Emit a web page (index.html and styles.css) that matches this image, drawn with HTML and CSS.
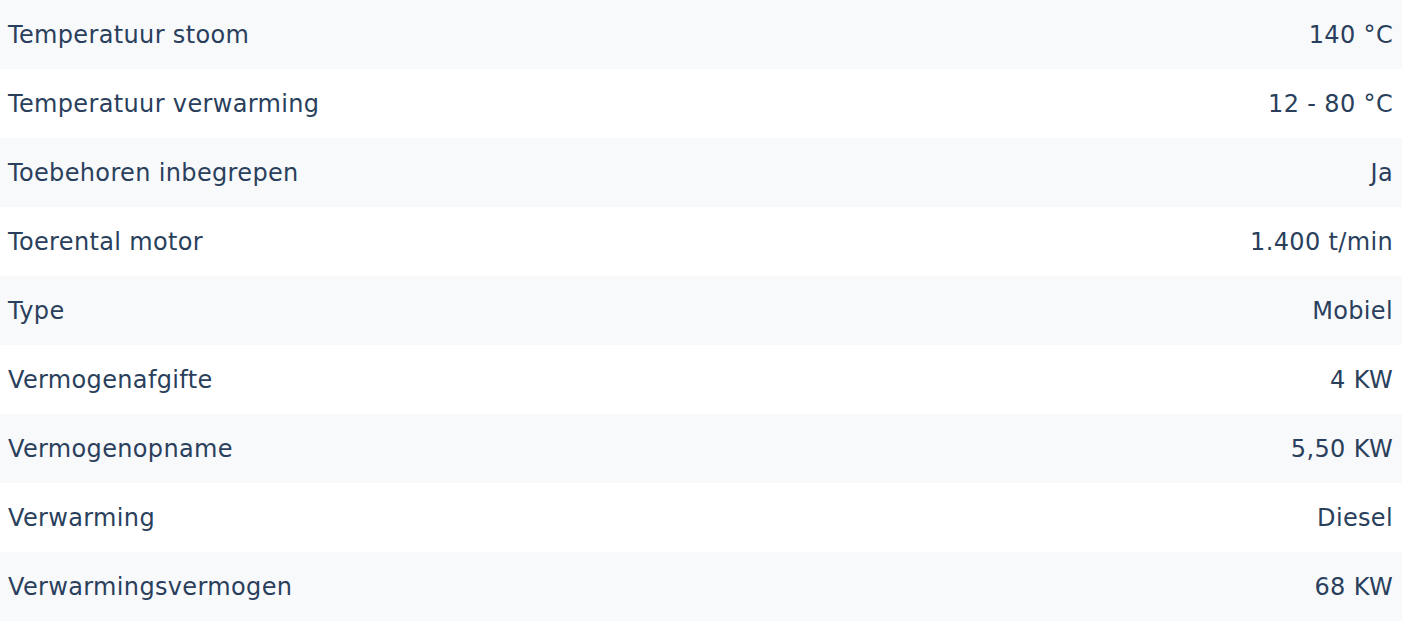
FILE: index.html
```html
<!DOCTYPE html>
<html lang="nl">
<head>
    <meta charset="UTF-8">
    <meta name="viewport" content="width=device-width, initial-scale=1.0">
    <title>Specificaties</title>
<link rel="stylesheet" href="styles.css">
</head>
<body>
    <div class="specs">
        <div class="spec-row"><span class="spec-label">Temperatuur stoom</span><span class="spec-value">140 °C</span></div>
        <div class="spec-row"><span class="spec-label">Temperatuur verwarming</span><span class="spec-value">12 - 80 °C</span></div>
        <div class="spec-row"><span class="spec-label">Toebehoren inbegrepen</span><span class="spec-value">Ja</span></div>
        <div class="spec-row"><span class="spec-label">Toerental motor</span><span class="spec-value">1.400 t/min</span></div>
        <div class="spec-row"><span class="spec-label">Type</span><span class="spec-value">Mobiel</span></div>
        <div class="spec-row"><span class="spec-label">Vermogenafgifte</span><span class="spec-value">4 KW</span></div>
        <div class="spec-row"><span class="spec-label">Vermogenopname</span><span class="spec-value">5,50 KW</span></div>
        <div class="spec-row"><span class="spec-label">Verwarming</span><span class="spec-value">Diesel</span></div>
        <div class="spec-row"><span class="spec-label">Verwarmingsvermogen</span><span class="spec-value">68 KW</span></div>
    </div>
</body>
</html>
```

FILE: styles.css
```css
body {
  margin: 0;
  padding: 0;
  background: #fff;
  font-family: "DejaVu Sans", "Noto Sans", sans-serif;
  color: #2a3f5c;
}

.specs {
  width: 1402px;
}

.spec-row {
  display: flex;
  justify-content: space-between;
  align-items: center;
  height: 69px;
  padding: 1px 9px 0 8px;
  box-sizing: border-box;
  font-size: 24px;
  letter-spacing: 0.35px;
  background: #fff;
}

.spec-row:nth-child(odd) {
  background: #f8f9fb;
}
```
